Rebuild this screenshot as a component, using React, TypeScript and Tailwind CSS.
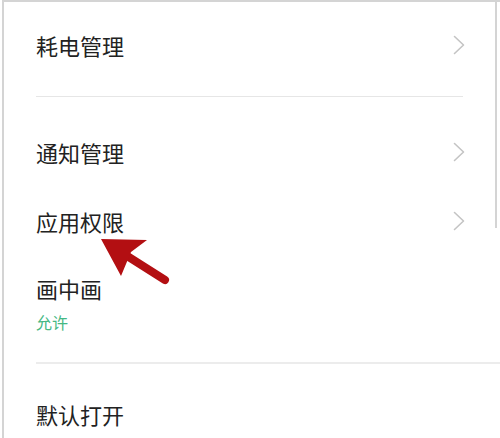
import React from 'react';

const font = { fontFamily: '"Noto Sans CJK SC", "Noto Sans", sans-serif' };

function Chevron() {
  return (
    <svg width="12" height="20" viewBox="0 0 12 20" className="shrink-0">
      <polyline points="1.5,1.5 10.5,10 1.5,18.5" fill="none" stroke="#c4c4c4" strokeWidth="1.6" strokeLinecap="round" strokeLinejoin="round" />
    </svg>
  );
}

function Row({ title, sub, chevron, className = '' }: { title: string; sub?: string; chevron?: boolean; className?: string }) {
  return (
    <div className={`flex items-center justify-between pl-[32px] pr-[35px] ${className}`}>
      <div className="flex flex-col">
        <span className="text-[22px] leading-[30px] text-[#222222]">{title}</span>
        {sub && <span className="mt-[9px] text-[16px] leading-[20px] text-[#45b883]">{sub}</span>}
      </div>
      {chevron && <Chevron />}
    </div>
  );
}

export default function App() {
  return (
    <div className="relative w-[500px] h-[438px] overflow-hidden bg-white" style={font}>
      <div className="h-full ml-[2px] border-l-2 border-t-2 border-[#d4d4d4]">
        <Row title="耗电管理" chevron className="pt-[28px]" />
        <div className="mt-[36px] ml-[32px] mr-[37px] h-[1px] bg-[#e6e6e6]" />
        <Row title="通知管理" chevron className="pt-[40px]" />
        <Row title="应用权限" chevron className="pt-[39px]" />
        <Row title="画中画" sub="允许" className="pt-[37px]" />
        <div className="mt-[30px] ml-[32px] h-[2px] bg-[#ececec]" />
        <Row title="默认打开" className="pt-[35px]" />
      </div>

      {/* frame edge on the right */}
      <div className="absolute top-0 right-[3px] w-[2px] h-[228px] bg-[#d4d4d4]" />

      {/* annotation arrow */}
      <svg className="absolute left-0 top-0 pointer-events-none" width="500" height="438" viewBox="0 0 500 438">
        <line x1="124" y1="254" x2="165" y2="280" stroke="#b30f12" strokeWidth="8" strokeLinecap="round" />
        <polygon points="101,239 147,240 131,252 121,276" fill="#b30f12" />
      </svg>
    </div>
  );
}
